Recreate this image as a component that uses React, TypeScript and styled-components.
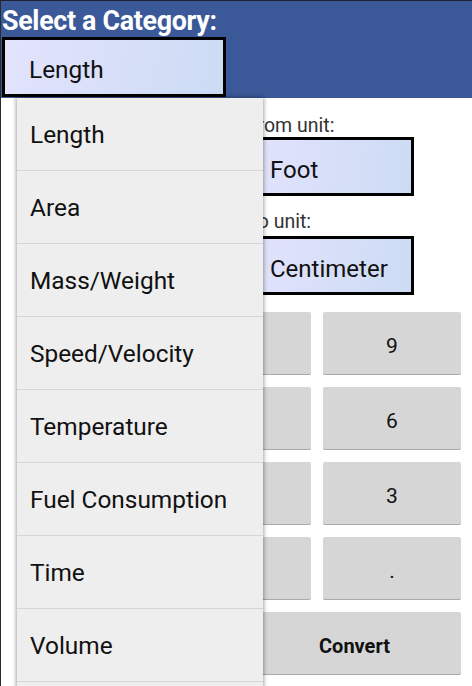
import React, { FunctionComponent } from "react"
import styled, { createGlobalStyle } from "styled-components"

const categories = [
  "Length",
  "Area",
  "Mass/Weight",
  "Speed/Velocity",
  "Temperature",
  "Fuel Consumption",
  "Time",
  "Volume",
  "Data Storage",
]

const keys = ["7", "8", "9", "4", "5", "6", "1", "2", "3", "0", "C", "."]

const GlobalStyle = createGlobalStyle`
  html, body {
    margin: 0;
    padding: 0;
    background: #ffffff;
  }
  body {
    font-family: Roboto, "Liberation Sans", sans-serif;
    overflow: hidden;
  }
`

const App: FunctionComponent = () => {
  return (
    <Screen>
      <GlobalStyle />
      <Header>
        <Title>Select a Category:</Title>
        <SelectBox>Length</SelectBox>
      </Header>
      <Body>
        <FormRow>
          <ValueColumn>
            <Label>Enter value:</Label>
            <ValueInput>1</ValueInput>
          </ValueColumn>
          <UnitColumn>
            <Label>From unit:</Label>
            <UnitBox>Foot</UnitBox>
            <Label spaced>To unit:</Label>
            <UnitBox>Centimeter</UnitBox>
          </UnitColumn>
        </FormRow>
        <Keypad>
          {keys.map(key => (
            <Key key={key} span={2}>
              {key}
            </Key>
          ))}
          <Key span={3}>Clear</Key>
          <Key span={3} bold>
            Convert
          </Key>
        </Keypad>
      </Body>
      <Dropdown>
        {categories.map(category => (
          <Option key={category}>{category}</Option>
        ))}
      </Dropdown>
    </Screen>
  )
}

const Screen = styled.div`
  position: relative;
  width: 472px;
  height: 686px;
  overflow: hidden;
  box-sizing: border-box;
  border-top: 1px solid #1c2233;
  border-left: 1px solid #2a2a2a;
  background: #ffffff;
`
const Header = styled.div`
  background: #3b5998;
  height: 97px;
  box-sizing: border-box;
  padding: 4px 0 0 1px;
  display: flex;
  flex-direction: column;
  align-items: flex-start;
`
const Title = styled.div`
  color: #ffffff;
  font-weight: bold;
  font-size: 26.8px;
  line-height: 32px;
  letter-spacing: -0.3px;
  height: 32px;
`
const selectGradient = `linear-gradient(100deg, #e3e3fd 0%, #d7dff8 55%, #ccdbf4 100%)`

const SelectBox = styled.div`
  width: 224px;
  height: 60px;
  box-sizing: border-box;
  border: 3px solid #000000;
  background: ${selectGradient};
  display: flex;
  align-items: center;
  padding: 4px 0 0 24px;
  font-size: 24.4px;
  color: #111111;
`
const Body = styled.div`
  padding: 17px 11px 0 22px;
`
const FormRow = styled.div`
  display: flex;
  gap: 12px;
`
const ValueColumn = styled.div`
  width: 209px;
  display: flex;
  flex-direction: column;
`
const UnitColumn = styled.div`
  width: 170px;
  display: flex;
  flex-direction: column;
`
const Label = styled.div<{ spaced?: boolean }>`
  font-size: 19.5px;
  line-height: 22px;
  color: #333333;
  padding-left: 3px;
  margin-top: ${p => (p.spaced ? "15px" : "0")};
  margin-bottom: ${p => (p.spaced ? "3px" : "0")};
`
const ValueInput = styled.div`
  height: 48px;
  border-bottom: 2px solid #33b5e5;
  font-size: 22px;
  display: flex;
  align-items: flex-end;
  padding: 0 0 6px 6px;
`
const UnitBox = styled.div`
  height: 59px;
  box-sizing: border-box;
  border: 3px solid #000000;
  background: ${selectGradient};
  display: flex;
  align-items: center;
  padding: 6px 0 0 23px;
  font-size: 24px;
  color: #111111;
`
const Keypad = styled.div`
  margin-top: 17px;
  display: grid;
  grid-template-columns: repeat(6, 1fr);
  grid-auto-rows: 62px;
  gap: 13px 12px;
`
const Key = styled.div<{ span: number; bold?: boolean }>`
  grid-column: span ${p => p.span};
  background: #d6d6d6;
  border-radius: 2px;
  box-shadow: 0 1px 0 #a9a9a9;
  display: flex;
  align-items: center;
  justify-content: center;
  padding-top: 5px;
  box-sizing: border-box;
  font-size: ${p => (p.bold ? "20px" : "21px")};
  font-weight: ${p => (p.bold ? "bold" : "normal")};
  color: #111111;
`
const Dropdown = styled.div`
  position: absolute;
  top: 97px;
  left: 16px;
  width: 246px;
  background: #eeeeee;
  box-shadow: 0 0 4px 1px rgba(0, 0, 0, 0.35);
`
const Option = styled.div`
  height: 72px;
  box-sizing: content-box;
  border-bottom: 1px solid #d6d6d6;
  display: flex;
  align-items: center;
  padding: 0 0 0 13px;
  font-size: 24.4px;
  color: #111111;
`

export default App
